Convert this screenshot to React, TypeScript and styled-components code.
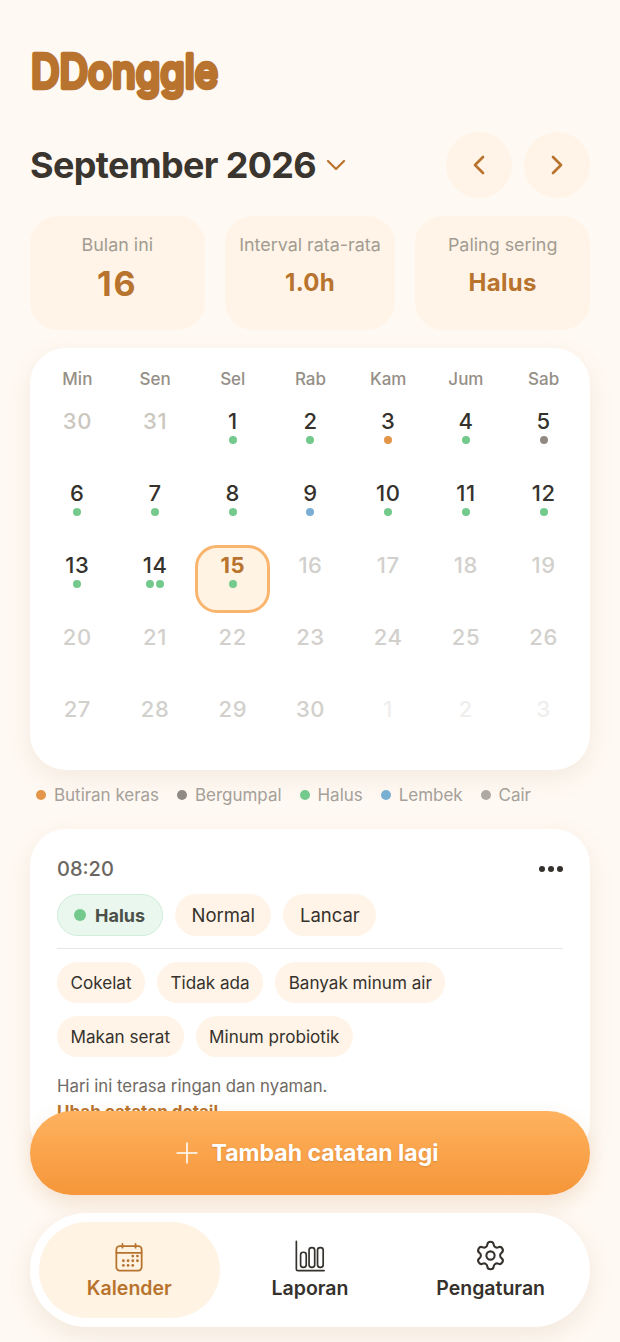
import React from 'react'
import styled, { createGlobalStyle } from 'styled-components'
import { ChevronDown, ChevronLeft, ChevronRight, Plus, Settings } from 'lucide-react'

const DOT = {
  hard: '#e3964a',
  lumpy: '#8f8b84',
  smooth: '#74c98c',
  soft: '#7aafd4',
  liquid: '#aeaaa3'
}

type DotKey = keyof typeof DOT
type Tone = 'current' | 'prev' | 'future' | 'next'
type Day = { label: number; tone: Tone; dots?: DotKey[]; today?: boolean }

const WEEK_DAYS = ['Min', 'Sen', 'Sel', 'Rab', 'Kam', 'Jum', 'Sab']

const DAYS: Day[] = [
  { label: 30, tone: 'prev' },
  { label: 31, tone: 'prev' },
  { label: 1, tone: 'current', dots: ['smooth'] },
  { label: 2, tone: 'current', dots: ['smooth'] },
  { label: 3, tone: 'current', dots: ['hard'] },
  { label: 4, tone: 'current', dots: ['smooth'] },
  { label: 5, tone: 'current', dots: ['lumpy'] },
  { label: 6, tone: 'current', dots: ['smooth'] },
  { label: 7, tone: 'current', dots: ['smooth'] },
  { label: 8, tone: 'current', dots: ['smooth'] },
  { label: 9, tone: 'current', dots: ['soft'] },
  { label: 10, tone: 'current', dots: ['smooth'] },
  { label: 11, tone: 'current', dots: ['smooth'] },
  { label: 12, tone: 'current', dots: ['smooth'] },
  { label: 13, tone: 'current', dots: ['smooth'] },
  { label: 14, tone: 'current', dots: ['smooth', 'smooth'] },
  { label: 15, tone: 'current', dots: ['smooth'], today: true },
  ...[16, 17, 18, 19, 20, 21, 22, 23, 24, 25, 26, 27, 28, 29, 30].map((label) => ({ label, tone: 'future' as Tone })),
  ...[1, 2, 3].map((label) => ({ label, tone: 'next' as Tone }))
]

const LEGEND: { key: DotKey; label: string }[] = [
  { key: 'hard', label: 'Butiran keras' },
  { key: 'lumpy', label: 'Bergumpal' },
  { key: 'smooth', label: 'Halus' },
  { key: 'soft', label: 'Lembek' },
  { key: 'liquid', label: 'Cair' }
]

const TONE_COLOR: Record<Tone, string> = {
  current: '#35312c',
  prev: '#cbc7bf',
  future: '#d2d0cc',
  next: '#efeeec'
}

const CalendarIcon = () => (
  <svg width='30' height='30' viewBox='0 0 32 32' fill='none' stroke='currentColor' strokeWidth='1.9' strokeLinecap='round'>
    <rect x='2.5' y='4.5' width='27' height='26' rx='3.5' />
    <path d='M2.5 11.5h27M9 2v4M23 2v4' />
    <g stroke='none' fill='currentColor'>
      {[
        [20, 15], [25, 15],
        [10, 20], [15, 20], [20, 20], [25, 20],
        [10, 25], [15, 25], [20, 25]
      ].map(([cx, cy]) => (
        <circle key={`${cx}-${cy}`} cx={cx} cy={cy} r='1.5' />
      ))}
    </g>
  </svg>
)

const ChartIcon = () => (
  <svg width='32' height='32' viewBox='0 0 32 34' fill='none' stroke='currentColor' strokeWidth='1.8' strokeLinecap='round'>
    <path d='M1.5 1.5v29.5a1.5 1.5 0 0 0 1.5 1.5h28' />
    <rect x='6' y='13' width='6' height='16' rx='2.8' />
    <rect x='15' y='8' width='6' height='21' rx='2.8' />
    <rect x='24' y='8' width='6' height='21' rx='2.8' />
  </svg>
)

const App = () => {
  return (
    <StyledScreen>
      <GlobalStyle />
      <StyledContent>
        <StyledLogo viewBox='0 0 200 64' aria-label='DDonggle'>
          <text x='1' y='46' textLength='187' lengthAdjust='spacingAndGlyphs'>
            DDonggle
          </text>
        </StyledLogo>

        <StyledMonthRow>
          <StyledMonthTitle>
            <h1>September 2026</h1>
            <ChevronDown size={32} strokeWidth={1.7} />
          </StyledMonthTitle>
          <StyledMonthNav>
            <StyledRoundButton>
              <ChevronLeft size={32} strokeWidth={2} />
            </StyledRoundButton>
            <StyledRoundButton>
              <ChevronRight size={32} strokeWidth={2} />
            </StyledRoundButton>
          </StyledMonthNav>
        </StyledMonthRow>

        <StyledStats>
          <StyledStat>
            <StyledStatLabel>Bulan ini</StyledStatLabel>
            <StyledStatValue $large>16</StyledStatValue>
          </StyledStat>
          <StyledStat>
            <StyledStatLabel>Interval rata-rata</StyledStatLabel>
            <StyledStatValue>1.0h</StyledStatValue>
          </StyledStat>
          <StyledStat>
            <StyledStatLabel>Paling sering</StyledStatLabel>
            <StyledStatValue>Halus</StyledStatValue>
          </StyledStat>
        </StyledStats>

        <StyledCalendar>
          <StyledWeekHeader>
            {WEEK_DAYS.map((day) => (
              <span key={day}>{day}</span>
            ))}
          </StyledWeekHeader>
          <StyledDays>
            {DAYS.map((day, index) => (
              <StyledDay key={index} $today={day.today}>
                <StyledDayNumber $tone={day.tone} $today={day.today}>
                  {day.label}
                </StyledDayNumber>
                <StyledDayDots>
                  {day.dots?.map((dot, i) => (
                    <StyledDot key={i} $color={DOT[dot]} $size={8} />
                  ))}
                </StyledDayDots>
              </StyledDay>
            ))}
          </StyledDays>
        </StyledCalendar>

        <StyledLegend>
          {LEGEND.map((item) => (
            <StyledLegendItem key={item.key}>
              <StyledDot $color={DOT[item.key]} $size={10} />
              {item.label}
            </StyledLegendItem>
          ))}
        </StyledLegend>

        <StyledEntry>
          <StyledEntryHead>
            <StyledTime>08:20</StyledTime>
            <StyledMore>
              <i />
              <i />
              <i />
            </StyledMore>
          </StyledEntryHead>
          <StyledChipRow>
            <StyledTypeChip>
              <StyledDot $color={DOT.smooth} $size={12} />
              Halus
            </StyledTypeChip>
            <StyledChip $big>Normal</StyledChip>
            <StyledChip $big>Lancar</StyledChip>
          </StyledChipRow>
          <StyledDivider />
          <StyledTagWrap>
            <StyledChip>Cokelat</StyledChip>
            <StyledChip>Tidak ada</StyledChip>
            <StyledChip>Banyak minum air</StyledChip>
            <StyledChip>Makan serat</StyledChip>
            <StyledChip>Minum probiotik</StyledChip>
          </StyledTagWrap>
          <StyledNote>Hari ini terasa ringan dan nyaman.</StyledNote>
          <StyledEditLink>Ubah catatan detail</StyledEditLink>
        </StyledEntry>
      </StyledContent>

      <StyledFooter>
        <StyledAddButton>
          <Plus size={34} strokeWidth={1.1} />
          Tambah catatan lagi
        </StyledAddButton>
        <StyledTabBar>
          <StyledTab $active>
            <CalendarIcon />
            Kalender
          </StyledTab>
          <StyledTab>
            <ChartIcon />
            Laporan
          </StyledTab>
          <StyledTab>
            <Settings size={33} strokeWidth={1.5} />
            Pengaturan
          </StyledTab>
        </StyledTabBar>
      </StyledFooter>
    </StyledScreen>
  )
}

export default App

const GlobalStyle = createGlobalStyle`
  html, body {
    margin: 0;
    padding: 0;
    background: #fff9f3;
  }

  * {
    box-sizing: border-box;
  }

  body {
    font-family: Inter, "Liberation Sans", sans-serif;
    color: #35312c;
  }
`

const StyledScreen = styled.div`
  position: relative;
  width: 100%;
  height: 100vh;
  overflow: hidden;
  background: #fff9f3;
`

const StyledContent = styled.main`
  padding: 42px 30px 0;
`

const StyledLogo = styled.svg`
  display: block;
  width: 200px;
  height: 64px;
  margin-bottom: 26px;
  overflow: visible;

  text {
    font-family: Inter, Lato, sans-serif;
    font-size: 46px;
    font-weight: 500;
    fill: #b8732e;
    stroke: #b8732e;
    stroke-width: 4.5px;
    stroke-linejoin: round;
  }
`

const StyledMonthRow = styled.div`
  display: flex;
  align-items: center;
  justify-content: space-between;
`

const StyledMonthTitle = styled.div`
  display: flex;
  align-items: center;
  gap: 4px;
  color: #b8732e;

  h1 {
    margin: 0;
    font-size: 36px;
    font-weight: 700;
    letter-spacing: -0.65px;
    color: #3a352f;
  }
`

const StyledMonthNav = styled.div`
  display: flex;
  gap: 12px;
`

const StyledRoundButton = styled.button`
  width: 66px;
  height: 66px;
  padding: 0;
  display: flex;
  align-items: center;
  justify-content: center;
  border: 0;
  border-radius: 50%;
  background: #fff4e7;
  color: #b8732e;
`

const StyledStats = styled.section`
  display: grid;
  grid-template-columns: 175fr 171fr 175fr;
  gap: 20px;
  margin-top: 18px;
`

const StyledStat = styled.div`
  height: 114px;
  padding-top: 18px;
  border-radius: 28px;
  background: #fff4e7;
  text-align: center;
`

const StyledStatLabel = styled.div`
  font-size: 17.9px;
  line-height: 21px;
  color: #a29c92;
  white-space: nowrap;
`

const StyledStatValue = styled.div<{ $large?: boolean }>`
  margin-top: ${({ $large }) => ($large ? '9px' : '13px')};
  font-size: ${({ $large }) => ($large ? '34px' : '24px')};
  line-height: ${({ $large }) => ($large ? '40px' : '30px')};
  font-weight: 700;
  letter-spacing: ${({ $large }) => ($large ? '2px' : '0.3px')};
  color: #b8732e;
`

const StyledCalendar = styled.section`
  margin-top: 18px;
  height: 422px;
  padding: 21px 7.5px 13px 8.5px;
  border-radius: 36px;
  background: #fff;
  box-shadow: 0 8px 24px rgba(150, 110, 60, 0.1);
`

const StyledWeekHeader = styled.div`
  display: grid;
  grid-template-columns: repeat(7, 1fr);
  height: 32px;
  font-size: 17px;
  line-height: 21px;
  font-weight: 500;
  color: #958f87;
  text-align: center;
`

const StyledDays = styled.div`
  display: grid;
  grid-template-columns: repeat(7, 1fr);
  grid-auto-rows: 68px;
  row-gap: 4px;
`

const StyledDay = styled.div<{ $today?: boolean }>`
  display: flex;
  flex-direction: column;
  align-items: center;
  padding-top: ${({ $today }) => ($today ? '5px' : '8px')};
  margin: 0 1.5px;
  border-radius: 22px;
  border: ${({ $today }) => ($today ? '3px solid #f9b56e' : '0')};
  background: ${({ $today }) => ($today ? '#fff3e4' : 'transparent')};
`

const StyledDayNumber = styled.span<{ $tone: Tone; $today?: boolean }>`
  font-size: 22px;
  line-height: 24px;
  font-weight: ${({ $today }) => ($today ? 700 : 550)};
  letter-spacing: 0.6px;
  color: ${({ $tone, $today }) => ($today ? '#b8732e' : TONE_COLOR[$tone])};
`

const StyledDayDots = styled.div`
  display: flex;
  gap: 2px;
  margin-top: 3px;
  height: 8px;
`

const StyledDot = styled.span<{ $color: string; $size: number }>`
  flex: none;
  display: block;
  width: ${({ $size }) => $size}px;
  height: ${({ $size }) => $size}px;
  border-radius: 50%;
  background: ${({ $color }) => $color};
`

const StyledLegend = styled.div`
  display: flex;
  gap: 18px;
  height: 20px;
  margin-top: 15px;
  padding-left: 6px;
`

const StyledLegendItem = styled.span`
  display: flex;
  align-items: center;
  gap: 8px;
  font-size: 17px;
  line-height: 20px;
  letter-spacing: -0.03px;
  color: #a5a099;
`

const StyledEntry = styled.section`
  margin-top: 24px;
  height: 330px;
  padding: 27px;
  border-radius: 36px;
  background: #fff;
  box-shadow: 0 8px 24px rgba(150, 110, 60, 0.1);
`

const StyledEntryHead = styled.div`
  display: flex;
  align-items: center;
  justify-content: space-between;
  height: 26px;
`

const StyledTime = styled.span`
  font-size: 20px;
  font-weight: 500;
  color: #6b665f;
`

const StyledMore = styled.span`
  display: flex;
  gap: 3px;

  i {
    display: block;
    width: 6px;
    height: 6px;
    border-radius: 50%;
    background: #35312c;
  }
`

const StyledChipRow = styled.div`
  display: flex;
  gap: 12px;
  margin-top: 12px;
`

const StyledTypeChip = styled.span`
  display: flex;
  align-items: center;
  gap: 9px;
  height: 42px;
  padding: 0 17px 0 16px;
  border: 1px solid #cfeeda;
  border-radius: 21px;
  background: #eaf7ee;
  font-size: 18px;
  font-weight: 700;
  color: #4b5048;
`

const StyledChip = styled.span<{ $big?: boolean }>`
  display: flex;
  align-items: center;
  height: ${({ $big }) => ($big ? '42px' : '41px')};
  padding: 0 ${({ $big }) => ($big ? '16.5px' : '13.5px')};
  border-radius: 21px;
  background: #fff4e7;
  font-size: ${({ $big }) => ($big ? '18.5px' : '17.1px')};
  font-weight: 400;
  color: #35312c;
`

const StyledDivider = styled.hr`
  height: 1px;
  margin: 12px 0 13px;
  border: 0;
  background: #e9e7e3;
`

const StyledTagWrap = styled.div`
  display: flex;
  flex-wrap: wrap;
  gap: 13px 12px;
`

const StyledNote = styled.p`
  margin: 18px 0 0;
  font-size: 16.8px;
  line-height: 22px;
  color: #6f6a64;
`

const StyledEditLink = styled.div`
  margin-top: 4px;
  font-size: 17px;
  line-height: 22px;
  font-weight: 700;
  color: #b8732e;
`

const StyledFooter = styled.div`
  position: absolute;
  left: 30px;
  right: 30px;
  bottom: 15px;
  display: flex;
  flex-direction: column;
  gap: 18px;
`

const StyledAddButton = styled.button`
  display: flex;
  align-items: center;
  justify-content: center;
  gap: 15px;
  width: 100%;
  height: 84px;
  padding: 0 5px 0 0;
  border: 0;
  border-radius: 42px;
  background: linear-gradient(180deg, #ffb25f 0%, #f59639 100%);
  box-shadow: 0 8px 20px rgba(190, 120, 50, 0.18);
  font-family: inherit;
  font-size: 23px;
  font-weight: 700;
  color: #fff;
  text-shadow: 0 1px 2px rgba(150, 85, 20, 0.3);

  svg {
    margin: 0 -7px;
  }
`

const StyledTabBar = styled.nav`
  display: grid;
  grid-template-columns: repeat(3, 1fr);
  height: 114px;
  padding: 9px;
  border-radius: 57px;
  background: #fff;
  box-shadow: 0 8px 24px rgba(150, 110, 60, 0.12);
`

const StyledTab = styled.a<{ $active?: boolean }>`
  display: flex;
  flex-direction: column;
  align-items: center;
  justify-content: flex-end;
  gap: 4px;
  padding-bottom: 18px;
  border-radius: 48px;
  background: ${({ $active }) => ($active ? '#fff3e4' : 'transparent')};
  font-size: 19.5px;
  line-height: 24px;
  font-weight: 600;
  color: ${({ $active }) => ($active ? '#b8732e' : '#35312c')};
`
